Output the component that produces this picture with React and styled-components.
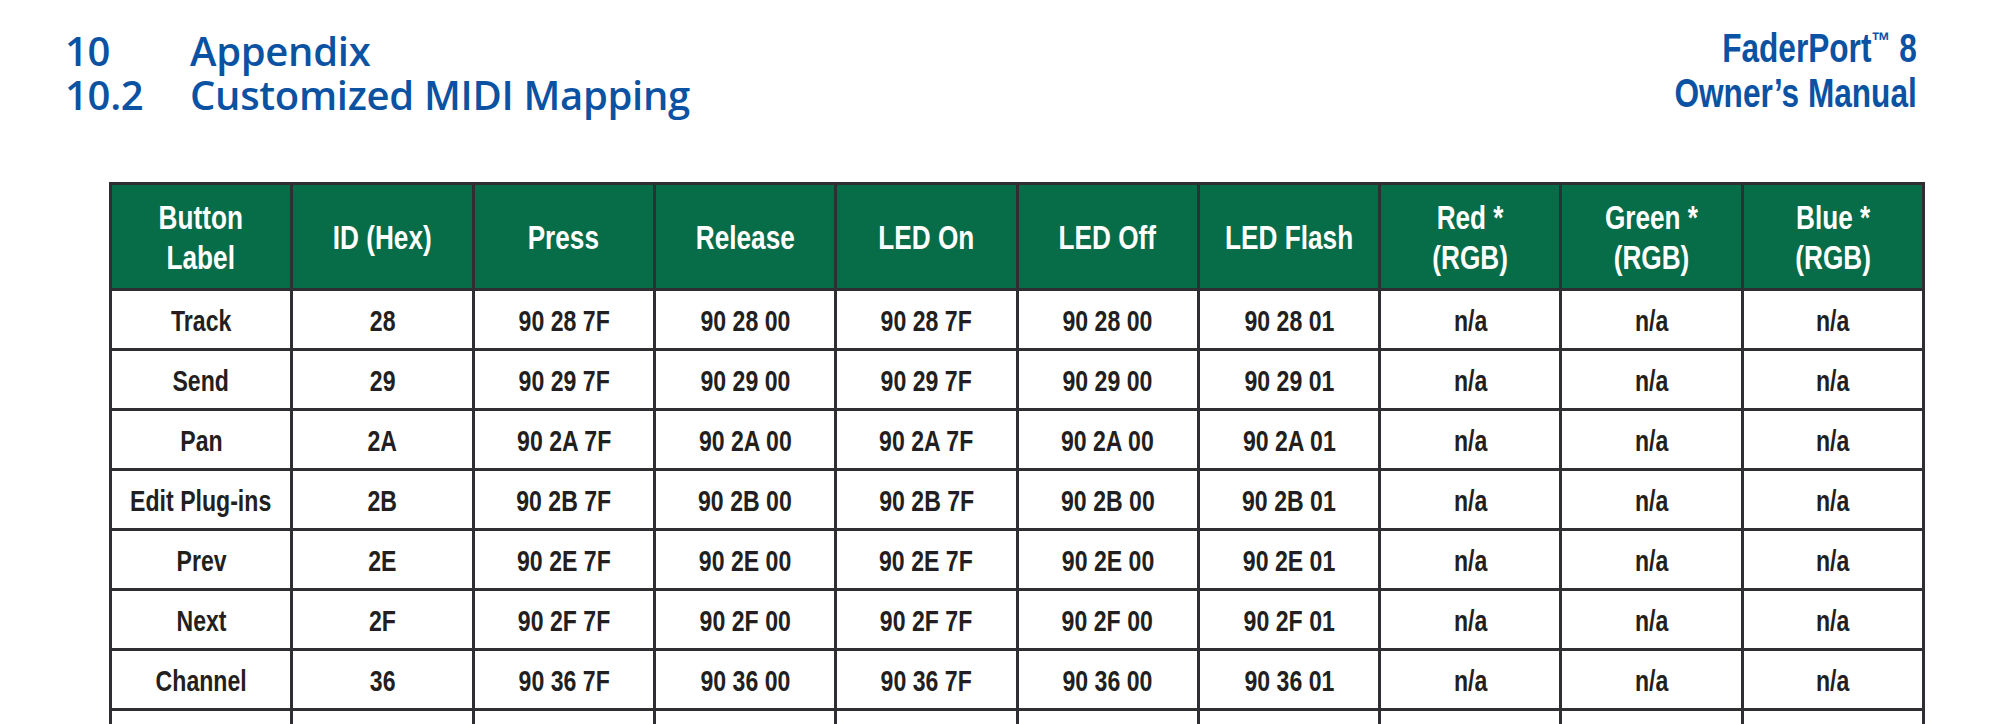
import React from "react";
import styled, { createGlobalStyle } from "styled-components";

const GlobalStyle = createGlobalStyle`
  html, body {
    margin: 0;
    padding: 0;
    background: #ffffff;
    overflow: hidden;
  }
`;

const Page = styled.div`
  width: 2000px;
  height: 724px;
  padding: 29px 83px 0 65px;
  box-sizing: border-box;
  display: flex;
  flex-direction: column;
  overflow: hidden;
`;

const TopBar = styled.div`
  display: flex;
  justify-content: space-between;
  align-items: flex-start;
  height: 88px;
  flex-shrink: 0;
`;

const Chapter = styled.div`
  display: grid;
  grid-template-columns: 125px auto;
  font-family: "Open Sans", "Liberation Sans", sans-serif;
  font-weight: 600;
  font-size: 40px;
  line-height: 44px;
  color: #0b52a2;
  letter-spacing: -0.3px;
`;

// narrow bold face, Arial Narrow style
const Squeeze = styled.span`
  display: inline-block;
  white-space: nowrap;
  font-family: "Liberation Sans", Arial, sans-serif;
  font-weight: 700;
  transform: scaleX(${(p) => p.$x || 0.77});
  transform-origin: ${(p) => p.$origin || "center"};
`;

const ManualTitle = styled.div`
  margin-top: -3px;
  font-size: 40px;
  line-height: 45px;
  color: #0b52a2;
  text-align: right;
`;

const Tm = styled.span`
  font-size: 0.6em;
  vertical-align: 0.55em;
  line-height: 0;
`;

const Grid = styled.div`
  width: 1816px;
  margin: 65px 0 0 44px;
  box-sizing: border-box;
  flex-shrink: 0;
  display: grid;
  grid-template-columns: repeat(10, minmax(0, 1fr));
  grid-template-rows: 103px;
  grid-auto-rows: 57px;
  gap: 3px;
  padding: 3px;
  background: #2e2e33;
`;

const HeadCell = styled.div`
  background: #076c48;
  color: #ffffff;
  display: flex;
  align-items: center;
  justify-content: center;
  text-align: center;
  font-size: 34px;
  line-height: 40px;
`;

const Cell = styled.div`
  background: #ffffff;
  color: #231f20;
  display: flex;
  align-items: center;
  justify-content: center;
  text-align: center;
  font-size: 30px;
  padding-top: 2px;
`;

const headers = [
  ["Button", "Label"],
  ["ID (Hex)"],
  ["Press"],
  ["Release"],
  ["LED On"],
  ["LED Off"],
  ["LED Flash"],
  ["Red *", "(RGB)"],
  ["Green *", "(RGB)"],
  ["Blue *", "(RGB)"],
];

const buttons = [
  ["Track", "28"],
  ["Send", "29"],
  ["Pan", "2A"],
  ["Edit Plug-ins", "2B"],
  ["Prev", "2E"],
  ["Next", "2F"],
  ["Channel", "36"],
];

const App = () => {
  return (
    <>
      <GlobalStyle />
      <Page>
        <TopBar>
          <Chapter>
            <span>10</span>
            <span>Appendix</span>
            <span>10.2</span>
            <span>Customized MIDI Mapping</span>
          </Chapter>
          <ManualTitle>
            <Squeeze $origin="right" $x={0.79}>
              FaderPort<Tm>™</Tm> 8
              <br />
              Owner’s Manual
            </Squeeze>
          </ManualTitle>
        </TopBar>
        <Grid>
          {headers.map((lines) => (
            <HeadCell key={lines.join(" ")}>
              <Squeeze>
                {lines.map((l, i) => (
                  <React.Fragment key={l}>
                    {i > 0 && <br />}
                    {l}
                  </React.Fragment>
                ))}
              </Squeeze>
            </HeadCell>
          ))}
          {buttons.map(([label, id]) => (
            <React.Fragment key={label}>
              <Cell><Squeeze>{label}</Squeeze></Cell>
              <Cell><Squeeze>{id}</Squeeze></Cell>
              <Cell><Squeeze>90 {id} 7F</Squeeze></Cell>
              <Cell><Squeeze>90 {id} 00</Squeeze></Cell>
              <Cell><Squeeze>90 {id} 7F</Squeeze></Cell>
              <Cell><Squeeze>90 {id} 00</Squeeze></Cell>
              <Cell><Squeeze>90 {id} 01</Squeeze></Cell>
              <Cell><Squeeze>n/a</Squeeze></Cell>
              <Cell><Squeeze>n/a</Squeeze></Cell>
              <Cell><Squeeze>n/a</Squeeze></Cell>
            </React.Fragment>
          ))}
          {/* next row, its text falls below the fold */}
          {headers.map((lines) => (
            <Cell key={"next-" + lines.join(" ")} />
          ))}
        </Grid>
      </Page>
    </>
  );
};

export default App;
